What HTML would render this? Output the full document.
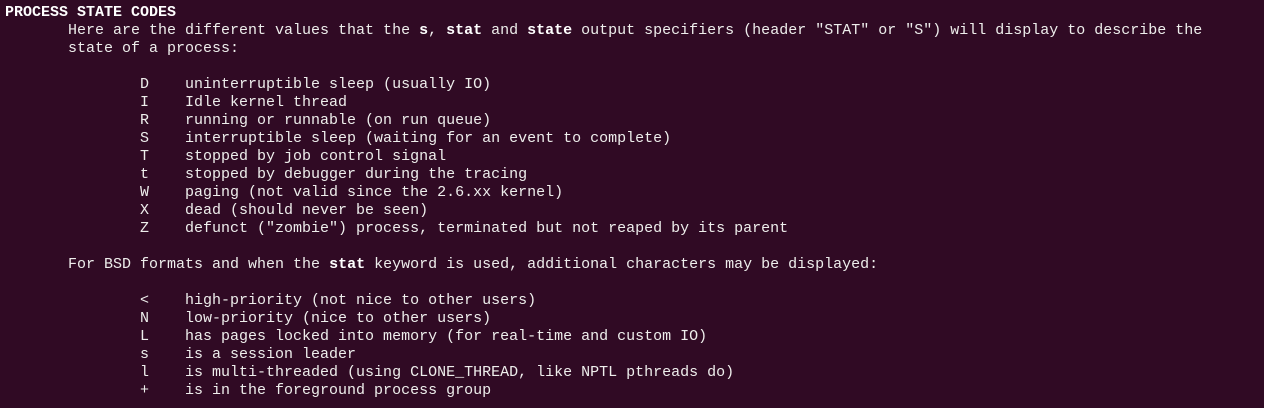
<!DOCTYPE html>
<html><head><meta charset="utf-8"><style>
html,body{margin:0;padding:0;background:#300a24;width:1264px;height:408px;overflow:hidden}
pre{margin:0;position:absolute;left:5px;top:4px;font-family:"Liberation Mono",monospace;font-size:15px;line-height:18px;color:#eeeeec}
b{color:#ffffff}
</style></head><body><pre><b>PROCESS STATE CODES</b>
       Here are the different values that the <b>s</b>, <b>stat</b> and <b>state</b> output specifiers (header "STAT" or "S") will display to describe the
       state of a process:

               D    uninterruptible sleep (usually IO)
               I    Idle kernel thread
               R    running or runnable (on run queue)
               S    interruptible sleep (waiting for an event to complete)
               T    stopped by job control signal
               t    stopped by debugger during the tracing
               W    paging (not valid since the 2.6.xx kernel)
               X    dead (should never be seen)
               Z    defunct ("zombie") process, terminated but not reaped by its parent

       For BSD formats and when the <b>stat</b> keyword is used, additional characters may be displayed:

               &lt;    high-priority (not nice to other users)
               N    low-priority (nice to other users)
               L    has pages locked into memory (for real-time and custom IO)
               s    is a session leader
               l    is multi-threaded (using CLONE_THREAD, like NPTL pthreads do)
               +    is in the foreground process group</pre></body></html>
